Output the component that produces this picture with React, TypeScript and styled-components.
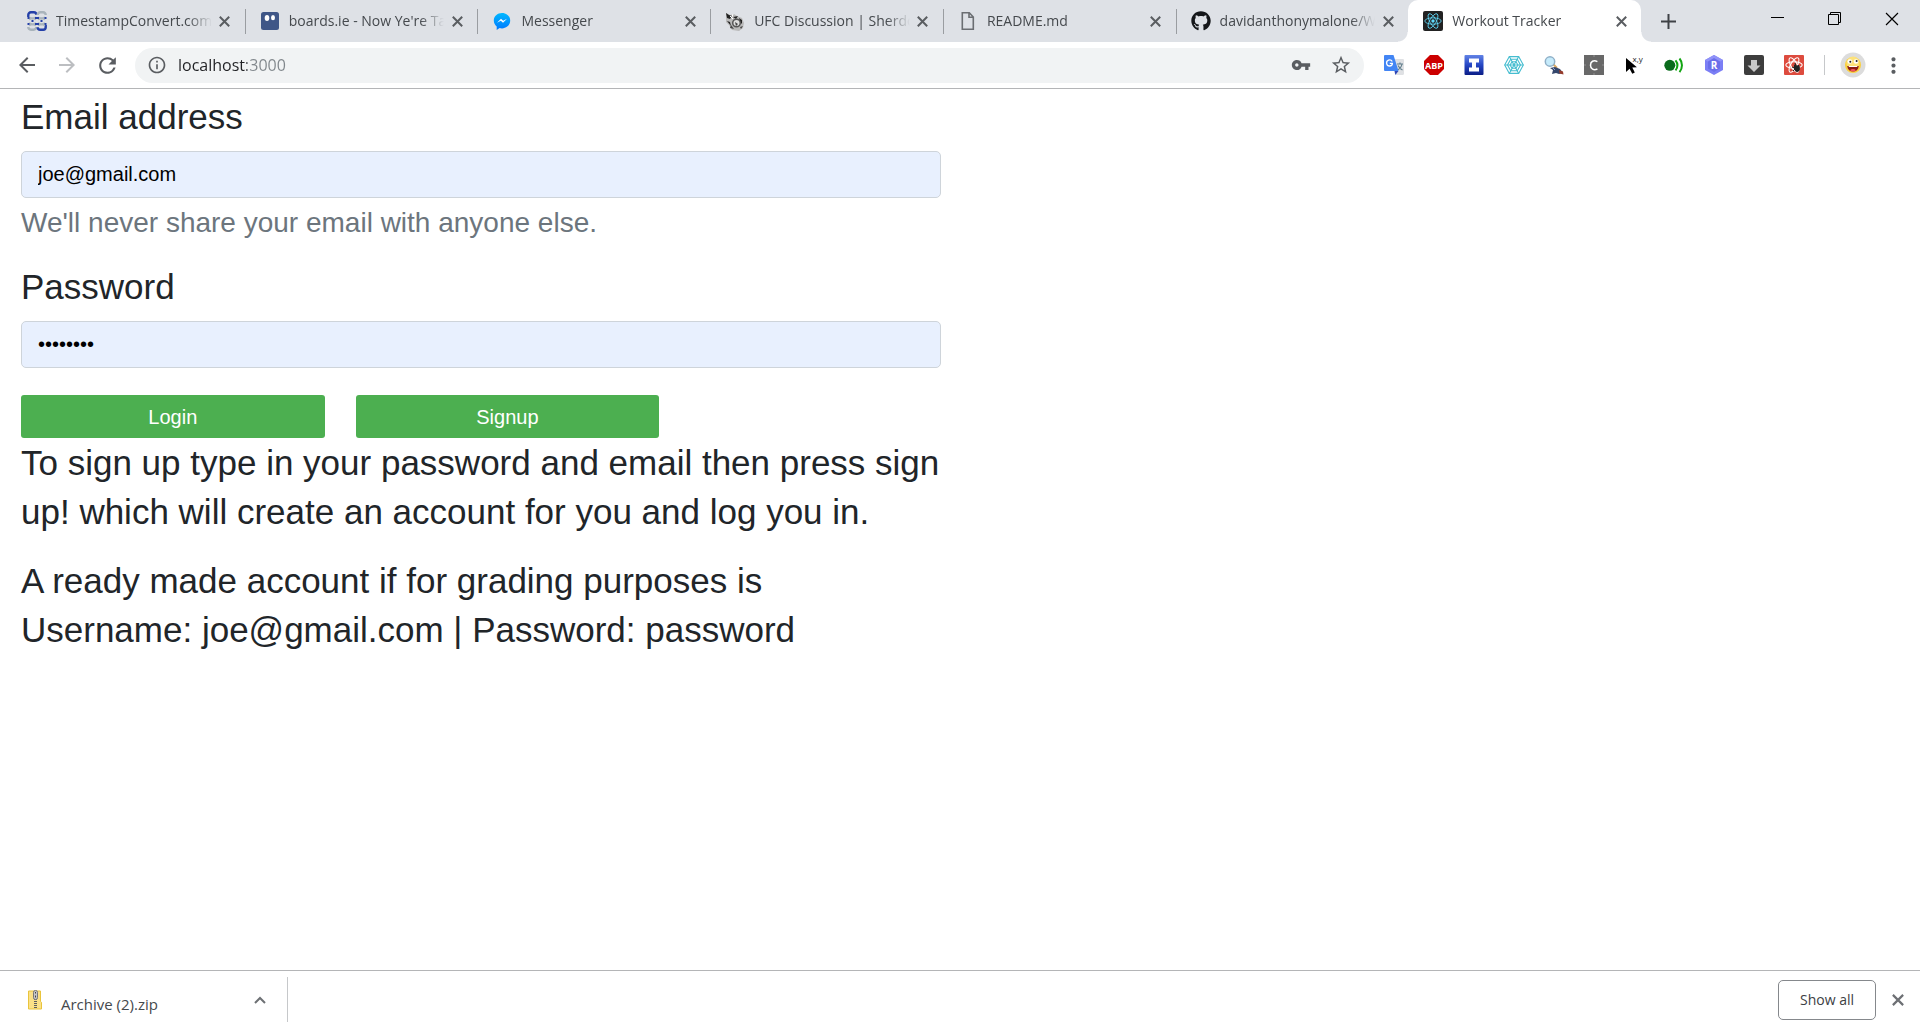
import React, { useState } from "react";
import styled, { createGlobalStyle, css } from "styled-components";
import { FaGithub } from "react-icons/fa";
import {
  MdArrowBack,
  MdArrowForward,
  MdRefresh,
  MdInfoOutline,
  MdVpnKey,
  MdStarBorder,
  MdMoreVert,
} from "react-icons/md";

const uiFont = `"Open Sans", "Noto Sans", sans-serif`;
const pageFont = `"Liberation Sans", Arial, sans-serif`;

const GlobalStyle = createGlobalStyle`
  *, *::before, *::after { box-sizing: border-box; }
  body { margin: 0; background: #fff; color: #212529; font-family: ${pageFont}; }
  button, input { font: inherit; margin: 0; }
  svg { display: block; flex: none; }
`;

const Window = styled.div`
  display: flex;
  flex-direction: column;
  min-height: 100vh;
`;

/* ---------- tab strip ---------- */

const TabStrip = styled.header`
  display: flex;
  height: 42px;
  padding-left: 12px;
  background: #dee1e6;
  font-family: ${uiFont};
`;

const TabList = styled.nav`
  display: flex;
  flex: 0 1 1629px;
  min-width: 0;
`;

const TabItem = styled.div<{ $active?: boolean; $divided?: boolean }>`
  position: relative;
  display: flex;
  flex: 1 1 0;
  min-width: 0;
  align-items: center;
  padding: 0 7px 0 15px;
  ${({ $divided }) =>
    $divided &&
    css`
      &::after {
        content: "";
        position: absolute;
        right: -1px;
        top: 9px;
        width: 1px;
        height: 25px;
        background: #9a9da1;
      }
    `}
  ${({ $active }) =>
    $active &&
    css`
      background: #fff;
      border-radius: 10px 10px 0 0;
      &::before,
      &::after {
        content: "";
        position: absolute;
        bottom: 0;
        width: 10px;
        height: 10px;
      }
      &::before {
        right: 100%;
        background: radial-gradient(circle at 0 0, transparent 9px, #fff 10px);
      }
      &::after {
        left: 100%;
        background: radial-gradient(circle at 100% 0, transparent 9px, #fff 10px);
      }
    `}
`;

const TabTitle = styled.button`
  display: flex;
  flex: 1;
  min-width: 0;
  align-items: center;
  gap: 9px;
  padding: 0;
  border: 0;
  background: none;
  color: #45494d;
  font-size: 14px;
  line-height: 20px;
  text-align: left;
`;

const TabText = styled.span`
  flex: 1;
  overflow: hidden;
  white-space: nowrap;
  mask-image: linear-gradient(90deg, #000 calc(100% - 24px), transparent);
`;

const TabClose = styled.button`
  display: grid;
  place-items: center;
  flex: none;
  width: 26px;
  height: 26px;
  padding: 0;
  border: 0;
  background: none;
  color: #5a5d61;
`;

const NewTab = styled.button`
  display: grid;
  place-items: center;
  width: 54px;
  padding: 0;
  border: 0;
  background: none;
  color: #3f4246;
`;

const WindowControls = styled.div`
  display: flex;
  margin-left: auto;
`;

const WindowButton = styled.button`
  display: grid;
  place-items: center;
  width: 57px;
  height: 37px;
  padding: 0;
  border: 0;
  background: none;
  color: #000;
`;

/* ---------- toolbar ---------- */

const Toolbar = styled.div`
  display: flex;
  align-items: center;
  height: 47px;
  padding: 0 7px;
  border-bottom: 1px solid #b4b5b7;
  font-family: ${uiFont};
`;

const ToolButton = styled.button<{ $dim?: boolean }>`
  display: grid;
  place-items: center;
  flex: none;
  width: 40px;
  height: 36px;
  padding: 0;
  border: 0;
  background: none;
  color: ${({ $dim }) => ($dim ? "#bcbec1" : "#5a5d61")};
`;

const AddressBar = styled.div`
  display: flex;
  flex: 1;
  align-items: center;
  height: 35px;
  margin: 0 10px 0 8px;
  padding: 0 3px 0 12px;
  border-radius: 18px;
  background: #f1f3f4;
  color: #5a5d61;
`;

/* The host is dark and the port after it is dimmed. */
const AddressInput = styled.input`
  flex: 1;
  min-width: 0;
  margin-left: 11px;
  padding: 0;
  border: 0;
  outline: 0;
  background: linear-gradient(90deg, #202124 69px, #80868b 69px);
  background-clip: text;
  color: #202124;
  -webkit-text-fill-color: transparent;
  font-size: 16px;
  line-height: 24px;
`;

const ToolDivider = styled.span`
  flex: none;
  width: 1px;
  height: 20px;
  margin: 0 8px 0 10px;
  background: #c6c8ca;
`;

/* ---------- page ---------- */

const Page = styled.main`
  flex: 1;
  width: 50%;
  padding: 3px 19px 20px 21px;
  font-size: 35px;
  line-height: 49px;
`;

const Field = styled.div`
  display: flex;
  flex-direction: column;
  margin-bottom: 20px;
`;

const FieldLabel = styled.label`
  margin-bottom: 10px;
`;

const FieldInput = styled.input`
  width: 100%;
  height: 47px;
  padding: 0 16px;
  border: 1px solid #ced4da;
  border-radius: 5px;
  outline: 0;
  background: #e8f0fe;
  color: #000;
  font-size: 20px;
  line-height: 30px;
`;

const FieldHint = styled.small`
  margin-top: 5px;
  color: #6c757d;
  font-size: 28px;
  line-height: 39px;
`;

const ButtonRow = styled.div`
  display: flex;
  gap: 31px;
  margin-top: 27px;
`;

const SubmitButton = styled.button`
  width: 33%;
  height: 43px;
  padding: 0;
  border: 0;
  border-radius: 3px;
  background: #4caf50;
  color: #fff;
  font-size: 20px;
  line-height: 30px;
`;

const Note = styled.p`
  margin: 0 0 20px;
`;

/* ---------- download shelf ---------- */

const Shelf = styled.footer`
  display: flex;
  align-items: center;
  height: 60px;
  padding: 0 10px 2px 0;
  border-top: 1px solid #b4b5b7;
  color: #45494d;
  font-family: ${uiFont};
  font-size: 15px;
  line-height: 20px;
`;

const Download = styled.div`
  display: flex;
  align-items: center;
  width: 288px;
  height: 45px;
  padding-left: 25px;
  border-right: 1px solid #c6c8ca;
`;

const DownloadName = styled.button`
  flex: 1;
  padding: 8px 0 0 16px;
  border: 0;
  background: none;
  color: inherit;
  text-align: left;
`;

const ShelfButton = styled.button`
  display: grid;
  place-items: center;
  width: 24px;
  height: 24px;
  padding: 0;
  border: 0;
  background: none;
  color: #6d7074;
`;

const DownloadMenu = styled(ShelfButton)`
  margin-right: 15px;
`;

const ShowAll = styled.button`
  width: 98px;
  height: 40px;
  margin: 0 10px 0 auto;
  padding: 0;
  border: 1px solid #85888c;
  border-radius: 5px;
  background: #fff;
  color: #3c4043;
  font-size: 14px;
  font-weight: 500;
`;

/* ---------- drawings ---------- */

const Cross = ({ size = 11, stroke = 2 }: { size?: number; stroke?: number }) => (
  <svg width={size} height={size} viewBox="0 0 11 11" fill="none" stroke="currentColor" strokeWidth={stroke}>
    <path d="M.8.8l9.4 9.4M10.2.8L.8 10.2" />
  </svg>
);

const CoilIcon = () => (
  <svg width="20" height="20" viewBox="0 0 20 20" fill="none" strokeWidth="2.4">
    <path d="M1.300 6v-2.200a2.500 2.500 0 012.500-2.500h3a2.500 2.500 0 012.500 2.500" stroke="#2440a8" />
    <path d="M10.700 4a2.600 2.600 0 012.600-2.700h2.800a2.600 2.600 0 012.600 2.700M1.300 16a2.600 2.600 0 002.600 2.700h2.800A2.600 2.600 0 009.300 16" stroke="#a9b4bb" />
    <path d="M10.700 16.200a2.500 2.500 0 002.500 2.500h3a2.500 2.500 0 002.500-2.500V14" stroke="#2440a8" />
    <g stroke="#a9b4bb" strokeWidth="2">
      <path d="M2 6.200c2 1.600 5 1.600 7 0M11 6.200c2 1.600 5 1.600 7 0M2 8.500c2-1.400 5-1.400 7 0M11 8.500c2-1.400 5-1.400 7 0" />
      <path d="M2 12c2 1.600 5 1.600 7 0M11 12c2 1.600 5 1.600 7 0M2 14.500c2-1.400 5-1.400 7 0M11 14.500c2-1.400 5-1.400 7 0" />
    </g>
    <path d="M.5 7h2M8 7h4M17.500 7h2M.5 13h2M8 13h4M17.500 13h2M4.500 10h2M13.500 10h2" stroke="#2440a8" strokeWidth="1.800" />
  </svg>
);

const BoardsIcon = () => (
  <svg width="20" height="20" viewBox="0 0 20 20">
    <rect x="1" y="1" width="18" height="18" rx="2.5" fill="#3f5687" />
    <ellipse cx="7" cy="7" rx="2.3" ry="3" fill="#fff" />
    <ellipse cx="13" cy="6.7" rx="2" ry="2.6" fill="#fff" />
  </svg>
);

const MessengerIcon = () => (
  <svg width="20" height="20" viewBox="0 0 20 20">
    <defs>
      <linearGradient id="messenger" x1="0" y1="0" x2="0" y2="1">
        <stop offset="0" stopColor="#00b8ff" />
        <stop offset="1" stopColor="#0078ff" />
      </linearGradient>
    </defs>
    <path d="M10 2c-4.600 0-8.200 3.300-8.200 7.600 0 2.400 1.100 4.400 2.900 5.800V19l2.900-1.900c.8.200 1.600.3 2.400.3 4.600 0 8.200-3.500 8.200-7.800S14.600 2 10 2z" fill="url(#messenger)" />
    <path d="M5 11.800l4-4.100 2.200 2 3.800-2-4 4.100-2.200-2z" fill="#fff" />
  </svg>
);

const SherdogIcon = () => (
  <svg width="20" height="20" viewBox="0 0 20 20">
    <path d="M1 2l4 2 4-1 3 2 5 2 2 5-1 5-4 3-7-1-3-5-3-3z" fill="#b9b9b9" />
    <path d="M1 2l3 2 3 1-2 3-3-1zM2 10l3 1 1 4zM8 6l5-1-2 3zM14 7l3 2v4l-2-2z" fill="#222" />
    <circle cx="11.500" cy="12" r="3.800" fill="#ddd" stroke="#555" strokeWidth="1.500" />
    <path d="M10 11l3 2-2 2zM6 14l3 4-4-1zM15 16l3-1-2 3z" fill="#444" />
    <path d="M5 5l3 3M8 3l-1 3" stroke="#fff" />
  </svg>
);

const FileIcon = () => (
  <svg width="20" height="20" viewBox="0 0 20 20" fill="none" stroke="#6b6e72" strokeWidth="1.600">
    <path d="M4.300 1.800h7l4 4.200v12.300h-11zM11 2v4.300h4.200" />
  </svg>
);

const Orbits = ({ color, width }: { color: string; width: number }) => (
  <g fill="none" stroke={color} strokeWidth={width}>
    {[0, 60, 120].map((turn) => (
      <ellipse key={turn} cx="10" cy="10" rx="8.200" ry="3.200" transform={`rotate(${turn} 10 10)`} />
    ))}
  </g>
);

const ReactIcon = () => (
  <svg width="20" height="20" viewBox="0 0 20 20">
    <rect width="20" height="20" rx="2" fill="#222" />
    <Orbits color="#61dafb" width={0.8} />
    <circle cx="10" cy="10" r="1.700" fill="#61dafb" />
  </svg>
);

const TranslateIcon = () => (
  <svg width="20" height="20" viewBox="0 0 20 20">
    <path d="M9 4h10.200l.8.800V19l-.8.900H12z" fill="#dfe1e4" />
    <path d="M10.500 16h4l-3.200 4z" fill="#2f46b5" />
    <path d="M13 9h6M16 7.500V9M18 9c-.5 3-2.500 5-4.500 6M14 10.500c1 2 2.500 3.500 4.500 4.500" stroke="#607d8b" strokeWidth="1.100" fill="none" />
    <path d="M1 0h8.500l5 16H1a1 1 0 01-1-1V1a1 1 0 011-1z" fill="#4285f4" />
    <path d="M8.200 6.500A3 3 0 105.700 11c1.700 0 2.700-1 2.700-2.700H5.800" stroke="#fff" strokeWidth="1.300" fill="none" />
  </svg>
);

const AdblockIcon = () => (
  <svg width="20" height="20" viewBox="0 0 20 20">
    <path d="M6 0h8l6 6v8l-6 6H6l-6-6V6z" fill="#cc0000" />
    <text x="10" y="13.500" textAnchor="middle" fill="#fff" fontFamily={uiFont} fontWeight="700" fontSize="9">
      ABP
    </text>
  </svg>
);

const BeamIcon = () => (
  <svg width="20" height="20" viewBox="0 0 20 20">
    <defs>
      <linearGradient id="beam" x1="0" y1="0" x2="0" y2="1">
        <stop offset="0" stopColor="#6283e6" />
        <stop offset=".5" stopColor="#2546c4" />
        <stop offset="1" stopColor="#0b1d86" />
      </linearGradient>
    </defs>
    <rect width="19" height="20" x=".5" rx="1" fill="url(#beam)" />
    <path d="M5 3.500h10v4h-3v5h3v4H5v-4h3v-5H5z" fill="#fff" />
  </svg>
);

const WebIcon = () => (
  <svg width="20" height="20" viewBox="0 0 20 20" fill="none" stroke="#45bdd0" strokeWidth="1.100">
    <path d="M5.300 1.600h9.400L19.300 10l-4.600 8.400H5.300L.7 10z" />
    <path d="M6.700 4.200h6.600l3.200 5.800-3.200 5.800H6.700L3.500 10z" />
    <path d="M8 6.700h4l1.900 3.300-1.900 3.300H8L6.100 10z" />
    <path d="M5.300 1.600l9.400 16.800M14.700 1.600L5.300 18.400M.7 10h18.600" />
  </svg>
);

const InspectIcon = () => (
  <svg width="20" height="20" viewBox="0 0 20 20">
    <path d="M9 9l4 4" stroke="#d8a860" strokeWidth="2" />
    <circle cx="6" cy="6.500" r="4.700" fill="#c6ebfb" stroke="#8fb0c8" strokeWidth="1.500" />
    <path d="M6 13l5-1 5 2 3 4-4 1-3-1-4 1 1-4z" fill="#34466b" />
    <path d="M15 15l4 1.500.5 3-4-1z" fill="#963c2c" />
    <path d="M9 13l2 2" stroke="#8ea5d5" />
  </svg>
);

const CIcon = () => (
  <svg width="20" height="20" viewBox="0 0 20 20">
    <rect width="20" height="20" fill="#686868" />
    <path d="M10 0v2M10 18v2M0 10h2M18 10h2" stroke="#909090" />
    <path d="M13.400 6.600c-3.800-1.900-6.900-.2-6.900 3.600 0 3.900 3.200 5.400 6.900 3.800" fill="none" stroke="#fff" strokeWidth="1.500" />
  </svg>
);

const PointerIcon = () => (
  <svg width="20" height="20" viewBox="0 0 20 20" overflow="visible">
    <path d="M2 3v14l3.600-3.300 2.700 5 2.500-1.200-2.500-5 4.600-.2z" fill="#000" />
    <text x="8.500" y="6.500" fill="#222" fontFamily={uiFont} fontSize="8">
      x,y
    </text>
  </svg>
);

const SignalIcon = () => (
  <svg width="20" height="20" viewBox="0 0 20 20" fill="none" stroke="#12a512" strokeWidth="2">
    <circle cx="5.800" cy="10.300" r="5.500" fill="#0a6b1c" stroke="none" />
    <path d="M11.500 5.300c2.400 3 2.400 7 0 10M15.500 3.500c3.300 4 3.300 9.600 0 13.600" />
  </svg>
);

const HexIcon = () => (
  <svg width="20" height="20" viewBox="0 0 20 20">
    <path d="M10 0l9 5v10l-9 5-9-5V5z" fill="#7b7ef5" />
    <path d="M10 0l9 5-9 5-9-5z" fill="#9092f8" />
    <path d="M10 3l6 3.500v7L10 17l-6-3.500v-7z" fill="#6a6eea" />
    <text x="10" y="13.500" textAnchor="middle" fill="#fff" fontFamily={uiFont} fontWeight="700" fontSize="10">
      R
    </text>
  </svg>
);

const SaveIcon = () => (
  <svg width="20" height="20" viewBox="0 0 20 20">
    <rect width="20" height="20" rx="2" fill="#3d3d3d" />
    <path d="M7 5h6v5.500h3.500L10 17l-6.500-6.500H7z" fill="#c9c9c9" />
  </svg>
);

const DebugIcon = () => (
  <svg width="20" height="20" viewBox="0 0 20 20">
    <rect width="20" height="20" rx="1" fill="#dd4b3e" />
    <Orbits color="#fff" width={1.1} />
    <path d="M10 9.500l2.500 1 2.500-.5 1 3-1 3-3 1-2-3z" fill="#222" />
    <path d="M8 12l8 3M9 16l6-6M11 8l3 9" stroke="#222" />
  </svg>
);

const AvatarIcon = () => (
  <svg width="26" height="26" viewBox="0 0 26 26">
    <circle cx="13" cy="13" r="12.500" fill="#dcdcdc" />
    <circle cx="13" cy="13" r="8" fill="#fbd03c" />
    <circle cx="13" cy="11" r="6.500" fill="#fde27a" />
    <circle cx="9.800" cy="9.500" r="2.300" fill="#fff" />
    <circle cx="16" cy="9.500" r="2.300" fill="#fff" />
    <circle cx="10.300" cy="9.800" r="1" fill="#222" />
    <circle cx="16.600" cy="8.900" r="1" fill="#222" />
    <path d="M7.200 14h11.600c-.5 3.700-2.800 5.500-5.800 5.500S7.700 17.700 7.200 14z" fill="#8c1c13" />
    <path d="M8.500 14h9l-.5 1h-8z" fill="#fff" />
    <path d="M10 18.200c1.500-1.700 4.500-1.700 6 0-1.800 1.600-4.200 1.600-6 0z" fill="#f2545b" />
  </svg>
);

const ZipIcon = () => (
  <svg width="20" height="20" viewBox="0 0 20 20">
    <path d="M3.500 1h12v10.500l1 .8V19h-13z" fill="#fbe187" stroke="#e9c43c" />
    <path d="M10.500 1v18" stroke="#5e5e5e" strokeWidth="3" strokeDasharray="1 1" />
    <rect x="8.500" y=".5" width="4" height="9" rx="1.800" fill="#c8c8c8" stroke="#77777a" />
    <path d="M10.500 2v1.500M10.500 5.500v2" stroke="#444" />
  </svg>
);

const tabs = [
  { title: "TimestampConvert.com", icon: <CoilIcon /> },
  { title: "boards.ie - Now Ye're Talkin'", icon: <BoardsIcon /> },
  { title: "Messenger", icon: <MessengerIcon /> },
  { title: "UFC Discussion | Sherdog", icon: <SherdogIcon /> },
  { title: "README.md", icon: <FileIcon /> },
  { title: "davidanthonymalone/Workout", icon: <FaGithub size={20} color="#15171a" /> },
  { title: "Workout Tracker", icon: <ReactIcon /> },
];

const extensions = [
  { name: "Translate", icon: <TranslateIcon /> },
  { name: "Adblock Plus", icon: <AdblockIcon /> },
  { name: "Text cursor", icon: <BeamIcon /> },
  { name: "Web", icon: <WebIcon /> },
  { name: "Inspector", icon: <InspectIcon /> },
  { name: "Colours", icon: <CIcon /> },
  { name: "Coordinates", icon: <PointerIcon /> },
  { name: "Signal", icon: <SignalIcon /> },
  { name: "Hexagon", icon: <HexIcon /> },
  { name: "Downloader", icon: <SaveIcon /> },
  { name: "React debugger", icon: <DebugIcon /> },
];

export default function App() {
  const [email, setEmail] = useState("joe@gmail.com");
  const [password, setPassword] = useState("password");
  const active = tabs.length - 1;

  return (
    <Window>
      <GlobalStyle />
      <TabStrip>
        <TabList aria-label="Tabs">
          {tabs.map((tab, i) => (
            <TabItem key={tab.title} $active={i === active} $divided={i < active - 1}>
              <TabTitle type="button">
                {tab.icon}
                <TabText>{tab.title}</TabText>
              </TabTitle>
              <TabClose type="button" aria-label="Close tab">
                <Cross />
              </TabClose>
            </TabItem>
          ))}
        </TabList>
        <NewTab type="button" aria-label="New tab">
          <svg width="15" height="15" viewBox="0 0 15 15" stroke="currentColor" strokeWidth="2">
            <path d="M7.500 0v15M0 7.500h15" />
          </svg>
        </NewTab>
        <WindowControls>
          <WindowButton type="button" aria-label="Minimize">
            <svg width="13" height="13" viewBox="0 0 13 13" stroke="currentColor">
              <path d="M0 5.500h13" />
            </svg>
          </WindowButton>
          <WindowButton type="button" aria-label="Restore">
            <svg width="13" height="13" viewBox="0 0 13 13" fill="none" stroke="currentColor">
              <path d="M.5 2.500h10v10H.5zM2.500 2.500v-2h10v10h-2" />
            </svg>
          </WindowButton>
          <WindowButton type="button" aria-label="Close window">
            <Cross size={14} stroke={0.9} />
          </WindowButton>
        </WindowControls>
      </TabStrip>

      <Toolbar>
        <ToolButton type="button" aria-label="Back">
          <MdArrowBack size={24} />
        </ToolButton>
        <ToolButton type="button" aria-label="Forward" $dim>
          <MdArrowForward size={24} />
        </ToolButton>
        <ToolButton type="button" aria-label="Reload">
          <MdRefresh size={25} />
        </ToolButton>
        <AddressBar>
          <MdInfoOutline size={20} />
          <AddressInput aria-label="Address" defaultValue="localhost:3000" spellCheck={false} />
          <ToolButton type="button" aria-label="Saved passwords">
            <MdVpnKey size={20} />
          </ToolButton>
          <ToolButton type="button" aria-label="Bookmark">
            <MdStarBorder size={22} />
          </ToolButton>
        </AddressBar>
        {extensions.map((extension) => (
          <ToolButton key={extension.name} type="button" aria-label={extension.name}>
            {extension.icon}
          </ToolButton>
        ))}
        <ToolDivider />
        <ToolButton type="button" aria-label="Profile">
          <AvatarIcon />
        </ToolButton>
        <ToolButton type="button" aria-label="Menu">
          <MdMoreVert size={25} />
        </ToolButton>
      </Toolbar>

      <Page>
        <form onSubmit={(e) => e.preventDefault()}>
          <Field>
            <FieldLabel htmlFor="email">Email address</FieldLabel>
            <FieldInput id="email" type="email" value={email} onChange={(e) => setEmail(e.target.value)} />
            <FieldHint>We'll never share your email with anyone else.</FieldHint>
          </Field>
          <Field>
            <FieldLabel htmlFor="password">Password</FieldLabel>
            <FieldInput id="password" type="password" value={password} onChange={(e) => setPassword(e.target.value)} />
          </Field>
          <ButtonRow>
            <SubmitButton type="submit">Login</SubmitButton>
            <SubmitButton type="button">Signup</SubmitButton>
          </ButtonRow>
        </form>
        <Note>
          To sign up type in your password and email then press sign up! which will create an account for you and log
          you in.
        </Note>
        <Note>
          A ready made account if for grading purposes is Username: joe@gmail.com | Password: password
        </Note>
      </Page>

      <Shelf>
        <Download>
          <ZipIcon />
          <DownloadName type="button">Archive (2).zip</DownloadName>
          <DownloadMenu type="button" aria-label="Download options">
            <svg width="12" height="8" viewBox="0 0 12 8" fill="none" stroke="currentColor" strokeWidth="2">
              <path d="M1 7l5-5 5 5" />
            </svg>
          </DownloadMenu>
        </Download>
        <ShowAll type="button">Show all</ShowAll>
        <ShelfButton type="button" aria-label="Close downloads">
          <Cross size={12} />
        </ShelfButton>
      </Shelf>
    </Window>
  );
}
